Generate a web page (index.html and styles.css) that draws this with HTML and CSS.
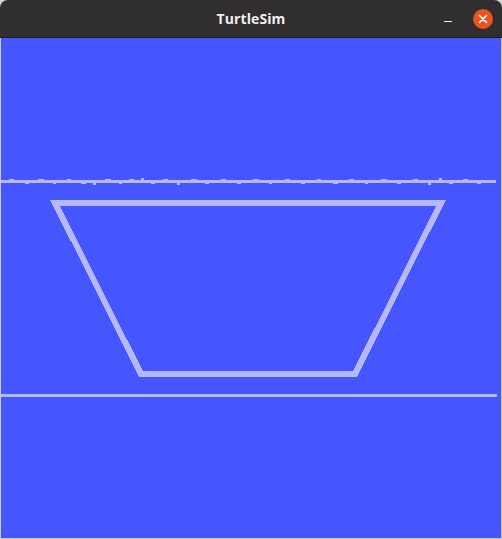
FILE: index.html
```html
<!DOCTYPE html>
<html>
<head>
<meta charset="utf-8">
<link rel="stylesheet" href="styles.css">
</head>
<body>
<div class="window">
  <div class="titlebar">
    <span class="title">TurtleSim</span>
    <div class="controls">
      <span class="minimize"></span>
      <span class="close">
        <svg width="20" height="20" viewBox="0 0 20 20"><path d="M6.5 6.5 L13.5 13.5 M13.5 6.5 L6.5 13.5" stroke="#fff" stroke-width="1.6" stroke-linecap="round"/></svg>
      </span>
    </div>
  </div>
  <div class="canvas">
    <svg width="500" height="500" viewBox="0 0 500 500" shape-rendering="crispEdges">
      <rect class="line" x="0" y="142" width="495" height="3"/>
      <g class="jit">
        <rect x="8" y="141" width="5" height="1"/><rect x="24" y="145" width="4" height="1"/>
        <rect x="37" y="141" width="6" height="1"/><rect x="52" y="145" width="3" height="1"/>
        <rect x="66" y="141" width="4" height="1"/><rect x="80" y="145" width="5" height="1"/>
        <rect x="92" y="145" width="3" height="2"/><rect x="104" y="141" width="6" height="1"/>
        <rect x="118" y="145" width="3" height="1"/><rect x="128" y="141" width="5" height="1"/>
        <rect x="140" y="140" width="3" height="2"/><rect x="150" y="145" width="4" height="1"/>
        <rect x="162" y="141" width="5" height="1"/><rect x="176" y="145" width="3" height="2"/>
        <rect x="190" y="141" width="6" height="1"/><rect x="204" y="145" width="4" height="1"/>
        <rect x="220" y="141" width="5" height="1"/><rect x="236" y="145" width="4" height="1"/>
        <rect x="252" y="141" width="6" height="1"/><rect x="268" y="145" width="3" height="1"/>
        <rect x="284" y="141" width="5" height="1"/><rect x="300" y="145" width="4" height="1"/>
        <rect x="316" y="141" width="4" height="1"/><rect x="332" y="145" width="5" height="1"/>
        <rect x="348" y="141" width="5" height="1"/><rect x="364" y="145" width="3" height="1"/>
        <rect x="380" y="141" width="6" height="1"/><rect x="396" y="145" width="4" height="1"/>
        <rect x="412" y="141" width="5" height="1"/><rect x="427" y="145" width="3" height="2"/>
        <rect x="438" y="140" width="3" height="2"/><rect x="448" y="145" width="4" height="1"/>
        <rect x="462" y="141" width="5" height="1"/><rect x="476" y="145" width="4" height="1"/>
      </g>
      <polygon class="trap" points="54,165 440,165 354,336 140,336"/>
      <rect class="line" x="0" y="356" width="496" height="3"/>
    </svg>
  </div>
</div>
</body>
</html>
```

FILE: styles.css
```css
html, body {
  margin: 0;
  padding: 0;
  background: #d6d6d6;
}
.window {
  width: 502px;
  height: 539px;
  display: flex;
  flex-direction: column;
}
.titlebar {
  height: 38px;
  background: #302e2e;
  border-radius: 8px 8px 0 0;
  display: flex;
  align-items: center;
  justify-content: center;
  position: relative;
  box-sizing: border-box;
  border-bottom: 1px solid #1e1d1d;
}
.title {
  font-family: "Open Sans", "Noto Sans", sans-serif;
  font-weight: 700;
  font-size: 14px;
  color: #f0efed;
  letter-spacing: 0.1px;
}
.controls {
  position: absolute;
  right: 9px;
  top: 9px;
  display: flex;
  align-items: center;
  gap: 21px;
}
.minimize {
  display: block;
  width: 8px;
  height: 1px;
  background: #f2f2f2;
  margin-top: 4px;
}
.close {
  width: 20px;
  height: 20px;
  border-radius: 50%;
  background: #e95420;
  display: flex;
}
.canvas {
  width: 500px;
  height: 500px;
  background: #4556ff;
  border: 1px solid #c9c9c9;
  border-top: none;
}
.canvas svg {
  display: block;
}
.line,
.jit rect {
  fill: #b3b8ff;
}
.trap {
  fill: none;
  stroke: #b3b8ff;
  stroke-width: 6;
  stroke-linejoin: miter;
}
```
